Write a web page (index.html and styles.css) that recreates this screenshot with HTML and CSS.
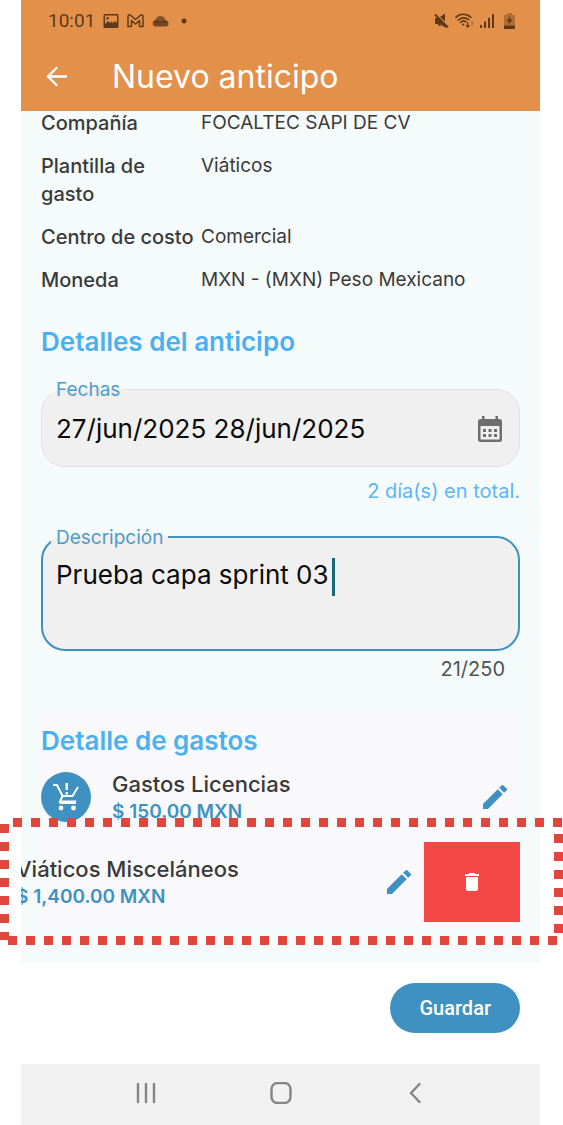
FILE: index.html
```html
<!DOCTYPE html>
<html lang="es">
<head>
    <meta charset="UTF-8">
    <meta name="viewport" content="width=device-width, initial-scale=1.0">
    <title>Nuevo anticipo</title>
    <link rel="stylesheet" href="styles.css">
</head>
<body>
    <div class="phone">
        <header class="app-header">
            <div class="status-bar">
                <span class="time">10:01</span>
                <svg width="16" height="16" viewBox="0 0 16 16"><path fill="currentColor" fill-rule="evenodd" d="M2 1h12a1.500 1.500 0 0 1 1.500 1.500v11a1.500 1.500 0 0 1-1.500 1.500H2a1.500 1.500 0 0 1-1.500-1.500v-11A1.500 1.500 0 0 1 2 1zM2 2.500V11l3-3 2 2 1.500-1.500 1.500 1.500 2-2 2 2V2.500zM4.500 4a1.300 1.300 0 1 1 0 2.600 1.300 1.300 0 0 1 0-2.600z"/></svg>
                <svg width="17" height="14" viewBox="0 0 17 14"><path fill="none" stroke="currentColor" stroke-width="1.500" stroke-linejoin="round" d="M1 12.500V2.500C1 1 2.500.5 3.500 1.200l5 4.300 5-4.300C14.500.5 16 1 16 2.500v10h-3.500V6.500l-4 3.500-4-3.500v6z"/></svg>
                <svg width="17" height="12" viewBox="0 0 17 12"><path fill="currentColor" opacity=".7" d="M3.500 5a5 5 0 0 1 9.500-1l1 4H3z"/><path fill="currentColor" opacity=".85" d="M3.500 11.500a3.300 3.300 0 0 1 0-6.500c2-.4 3.500.3 5 1.500L12 5c3-.3 4.500 1.300 4.500 3.300a3 3 0 0 1-3 3.200z"/></svg>
                <svg class="dot" width="6" height="6" viewBox="0 0 6 6"><circle cx="3" cy="3" r="2.500" fill="currentColor"/></svg>
                <div class="status-icons">
                    <svg width="15" height="16" viewBox="0 0 15 16"><path fill="currentColor" d="M1 5h3l8 8v2L6.500 11.500V14L3.500 11H1zM6 4l5-3.500v8z"/><path stroke="currentColor" stroke-width="2" d="M1 1.500 14 14.500"/></svg>
                    <svg width="19" height="16" viewBox="0 0 21 17"><g fill="none" stroke="currentColor" stroke-width="1.700" stroke-linecap="round"><path d="M1 4.500c4.500-4.500 12-4.500 16.500 0M3.500 7.500c3.500-3.200 8.500-3.200 11.500-.5M6 10c2-1.800 4.500-1.800 6-.5"/></g><circle cx="9" cy="12.500" r="1.200" fill="currentColor"/><path stroke="currentColor" fill="none" stroke-width="1.400" d="M14 10v5m-2-2 2 2.300 2-2.300"/><path opacity=".5" stroke="currentColor" fill="none" d="M19 14V9.500m-1.500 1.500 1.500-1.800 1.500 1.800"/></svg>
                    <svg width="14" height="16" viewBox="0 0 14 16"><g fill="currentColor"><rect x="0" y="12" width="2" height="3"/><rect x="4" y="8.500" width="2" height="6.500"/><rect x="8" y="5" width="2" height="10"/><rect x="12" y="1" width="2" height="14"/></g></svg>
                    <svg class="battery" width="11" height="16" viewBox="0 0 11 16"><path fill="currentColor" opacity=".4" d="M3 0h5v2h3v11H0V2h3z"/><path fill="currentColor" d="M0 12.500h11V16H0zM6.500 3 2.500 8.500H5L4.500 12l4-5.500H6z"/></svg>
                </div>
            </div>
            <div class="title-bar">
                <button class="icon-btn" type="button" aria-label="Volver">
                    <svg width="22" height="22" viewBox="0 0 22 22"><path fill="none" stroke="currentColor" stroke-width="2.400" stroke-linecap="round" stroke-linejoin="round" d="M20 10.500H2M10.500 2 2 10.500l8.500 8.500"/></svg>
                </button>
                <h1>Nuevo anticipo</h1>
            </div>
        </header>

        <main class="content">
            <dl class="summary">
                <dt>Compañía</dt><dd>FOCALTEC SAPI DE CV</dd>
                <dt>Plantilla de gasto</dt><dd>Viáticos</dd>
                <dt>Centro de costo</dt><dd>Comercial</dd>
                <dt>Moneda</dt><dd>MXN - (MXN) Peso Mexicano</dd>
            </dl>

            <h2>Detalles del anticipo</h2>

            <fieldset class="field">
                <legend><label for="fechas">Fechas</label></legend>
                <div class="field-row">
                    <input id="fechas" type="text" value="27/jun/2025 28/jun/2025">
                    <button class="icon-btn calendar" type="button" aria-label="Abrir calendario">
                        <svg width="24" height="26" viewBox="0 0 24 26"><path fill="currentColor" fill-rule="evenodd" d="M4 0h2.500v3h11V0H20v3h1.500A2.500 2.500 0 0 1 24 5.500v18a2.500 2.500 0 0 1-2.500 2.500h-19A2.500 2.500 0 0 1 0 23.500v-18A2.500 2.500 0 0 1 2.500 3H4zM2.500 10v13.500h19V10z"/><path fill="currentColor" d="M5 13h3v3H5zM10.500 13h3v3h-3zM16 13h3v3h-3zM5 18h3v3H5zM10.500 18h3v3h-3zM16 18h3v3h-3z"/></svg>
                    </button>
                </div>
            </fieldset>
            <p class="total-days">2 día(s) en total.</p>

            <fieldset class="field focused">
                <legend><label for="descripcion">Descripción</label></legend>
                <textarea id="descripcion" rows="2" maxlength="250">Prueba capa sprint 03</textarea>
                <span class="caret"></span>
            </fieldset>
            <p class="counter">21/250</p>

            <section class="expenses">
                <h2>Detalle de gastos</h2>
                <div class="expense">
                    <span class="expense-icon">
                        <svg width="26" height="28" viewBox="0 0 26 28"><g fill="none" stroke="currentColor" stroke-width="2"><path d="M0 2h4l5.500 11h10L25 4M9.500 13 7 18.500h16M7.500 18.500V20H23"/></g><path fill="currentColor" d="M12.500 0h2.500v7h-2.500zM12.500 9h2.500v2.500h-2.500z"/><circle cx="8" cy="25" r="2.400" fill="currentColor"/><circle cx="20.500" cy="25" r="2.400" fill="currentColor"/></svg>
                    </span>
                    <div class="expense-text">
                        <h3>Gastos Licencias</h3>
                        <p>$ 150.00 MXN</p>
                    </div>
                    <button class="icon-btn edit" type="button" aria-label="Editar Gastos Licencias">
                        <svg width="24" height="24" viewBox="3 3 18 18"><path fill="currentColor" d="M3 17.250V21h3.750L17.810 9.940l-3.750-3.750zM20.710 7.040a1 1 0 0 0 0-1.410l-2.340-2.340a1 1 0 0 0-1.410 0l-1.830 1.830 3.750 3.750z"/></svg>
                    </button>
                </div>

                <div class="swipe">
                    <div class="swipe-track">
                        <div class="expense">
                            <span class="expense-icon"></span>
                            <div class="expense-text">
                                <h3>Viáticos Misceláneos</h3>
                                <p>$ 1,400.00 MXN</p>
                            </div>
                            <button class="icon-btn edit" type="button" aria-label="Editar Viáticos Misceláneos">
                                <svg width="24" height="24" viewBox="3 3 18 18"><path fill="currentColor" d="M3 17.250V21h3.750L17.810 9.940l-3.750-3.750zM20.710 7.040a1 1 0 0 0 0-1.410l-2.340-2.340a1 1 0 0 0-1.410 0l-1.830 1.830 3.750 3.750z"/></svg>
                            </button>
                        </div>
                        <button class="delete" type="button" aria-label="Eliminar">
                            <svg width="14" height="18" viewBox="5 3 14 18"><path fill="currentColor" d="M6 19a2 2 0 0 0 2 2h8a2 2 0 0 0 2-2V7H6zM19 4h-3.500l-1-1h-5l-1 1H5v2h14z"/></svg>
                        </button>
                    </div>
                    <div class="highlight"></div>
                </div>
            </section>
        </main>

        <div class="actions">
            <button class="save" type="button">Guardar</button>
        </div>

        <nav class="nav-bar">
            <button class="icon-btn" type="button" aria-label="Recientes">
                <svg width="20" height="22" viewBox="0 0 20 22"><path stroke="currentColor" stroke-width="2.400" stroke-linecap="round" d="M2 2v18M10 2v18M18 2v18"/></svg>
            </button>
            <button class="icon-btn" type="button" aria-label="Inicio">
                <svg width="22" height="22" viewBox="0 0 22 22"><rect x="1.500" y="1" width="19" height="20" rx="6" fill="none" stroke="currentColor" stroke-width="2.400"/></svg>
            </button>
            <button class="icon-btn" type="button" aria-label="Atrás">
                <svg width="12" height="22" viewBox="0 0 12 22"><path fill="none" stroke="currentColor" stroke-width="2.400" stroke-linecap="round" d="M10.500 2 2 11l8.500 9"/></svg>
            </button>
        </nav>
    </div>
</body>
</html>
```

FILE: styles.css
```css
* {
    box-sizing: border-box;
}
body {
    margin: 0;
    padding: 0 23px 0 21px;
    background: #fff;
    color: #3a3a3a;
    font-family: Inter, "Open Sans", sans-serif;
    font-size: 19px;
    line-height: 28px;
}
h1, h2, h3, p, dl, dd {
    margin: 0;
}
svg {
    display: block;
    flex: none;
}
.phone {
    display: flex;
    flex-direction: column;
    min-height: 100vh;
}
.icon-btn {
    display: flex;
    padding: 0;
    border: none;
    background: none;
    color: inherit;
    cursor: pointer;
}

/* Header */
.app-header {
    position: relative;
    z-index: 1;
    height: 111px;
    background: #e3914a;
    color: #fff;
}
.status-bar {
    display: flex;
    align-items: center;
    gap: 8px;
    height: 42px;
    padding: 0 25px 0 27px;
    color: #5f3a1a;
}
.time {
    font-family: Roboto, sans-serif;
    font-size: 19px;
}
.dot {
    margin-left: 4px;
}
.status-icons {
    display: flex;
    align-items: center;
    gap: 6px;
    margin-left: auto;
}
.battery {
    margin-left: 4px;
}
.title-bar {
    display: flex;
    align-items: center;
    gap: 44px;
    height: 69px;
    padding: 0 25px;
}
h1 {
    font-size: 32px;
    font-weight: 400;
}

/* Form */
.content {
    padding: 0 20px 36px;
    margin-top: -2px;
    background: #f5fbfb;
}
.summary {
    display: grid;
    grid-template-columns: 154px 1fr;
    column-gap: 6px;
    row-gap: 15px;
}
dt {
    font-size: 20px;
    font-weight: 500;
}
h2 {
    color: #4ab0f1;
    font-size: 26px;
    font-weight: 600;
    line-height: 32px;
}
.summary + h2 {
    margin-top: 32px;
}
.field {
    position: relative;
    min-width: 0;
    margin: 20px 0 0;
    padding: 0 17px 0 9px;
    border: 1px solid #e2e2e2;
    border-radius: 24px;
    background: #f0f0f0;
}
legend {
    padding: 2px 5px 0;
    color: #4f9cc8;
    font-size: 19px;
    line-height: 20px;
}
.field-row {
    display: flex;
    align-items: center;
    height: 66px;
    padding-bottom: 8px;
}
.field input,
.field textarea {
    display: block;
    flex: 1;
    width: 100%;
    min-width: 0;
    padding: 0 5px;
    border: none;
    outline: none;
    background: none;
    color: #0a0a0a;
    font: inherit;
    font-size: 26px;
    line-height: 36px;
}
.field textarea {
    height: 101px;
    padding-top: 9px;
    resize: none;
}
.calendar {
    color: #6e6e6e;
}
.focused {
    margin-top: 21px;
    padding-left: 8px;
    border: 2px solid #3f91c1;
}
.caret {
    position: absolute;
    top: 10px;
    left: 289px;
    width: 3px;
    height: 38px;
    background: #156a78;
}
.total-days {
    margin-top: 10px;
    color: #5cb6f2;
    font-size: 20px;
    text-align: right;
}
.counter {
    margin-top: 4px;
    padding-right: 15px;
    color: #4f5555;
    font-size: 20px;
    text-align: right;
}

/* Expenses */
.expenses {
    margin-top: 29px;
    padding: 13px 0 5px;
    background: #f9f9fc;
}
.expense {
    display: flex;
    align-items: center;
    height: 80px;
    padding-right: 13px;
}
.expense-icon {
    display: flex;
    flex: none;
    align-items: center;
    justify-content: center;
    width: 50px;
    height: 50px;
    border-radius: 50%;
    background: #3f91c1;
    color: #fff;
}
.expense-text {
    flex: 1;
    margin-left: 21px;
    padding-top: 2px;
}
.expense h3 {
    font-size: 22px;
    font-weight: 500;
    line-height: 28px;
}
.expense p {
    color: #3f91c1;
    font-weight: 600;
}
.edit {
    color: #3f91c1;
}
.swipe {
    position: relative;
    margin-top: 5px;
}
.swipe-track {
    display: flex;
    justify-content: flex-end;
    margin-left: -20px;
    overflow: hidden;
}
.swipe .expense {
    flex: none;
    width: calc(100% - 20px);
}
.delete {
    display: flex;
    flex: none;
    align-items: center;
    justify-content: center;
    width: 96px;
    border: none;
    background: #f64747;
    color: #fff;
    cursor: pointer;
}
/* Dashed frame around the swiped row, wider than the screen */
.highlight {
    position: absolute;
    inset: -24px -43px -23px -41px;
    pointer-events: none;
    background:
        repeating-linear-gradient(90deg, #e1463c 0 9px, transparent 9px 18px) 13px 0 / 100% 9px no-repeat,
        repeating-linear-gradient(90deg, #e1463c 0 9px, transparent 9px 18px) 8px 100% / calc(100% - 8px) 9px no-repeat,
        repeating-linear-gradient(#e1463c 0 9px, transparent 9px 18px) 0 6px / 9px calc(100% - 11px) no-repeat,
        repeating-linear-gradient(#e1463c 0 9px, transparent 9px 18px) 100% 16px / 9px calc(100% - 28px) no-repeat;
}

/* Footer */
.actions {
    display: flex;
    flex: 1;
    align-items: flex-start;
    justify-content: flex-end;
    padding: 20px 20px 30px;
}
.save {
    padding: 11px 29px;
    border: none;
    border-radius: 26px;
    background: #3f91c1;
    color: #fff;
    font-family: Roboto, sans-serif;
    font-size: 20px;
    font-weight: 500;
    line-height: 28px;
    cursor: pointer;
}
.nav-bar {
    display: flex;
    align-items: center;
    justify-content: space-between;
    height: 61px;
    padding: 0 22% 3px;
    background: #f1f1f1;
    color: #858585;
}
.nav-bar .icon-btn {
    justify-content: center;
    width: 22px;
}
```
